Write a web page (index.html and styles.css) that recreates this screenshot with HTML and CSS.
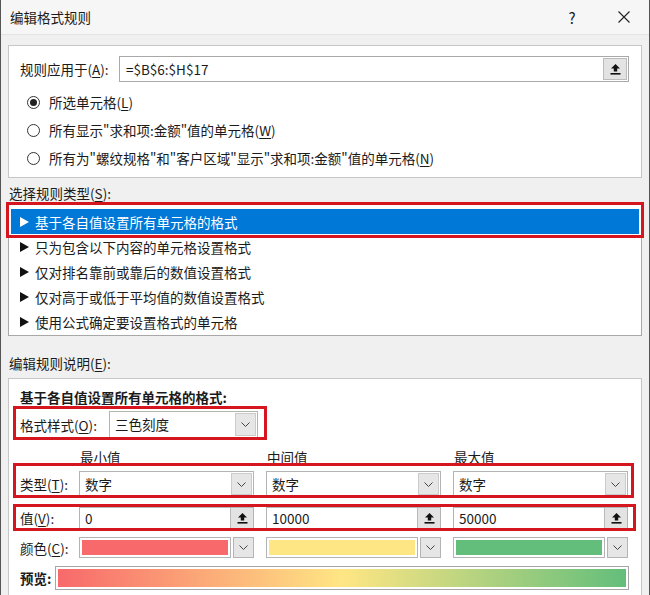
FILE: index.html
```html
<!DOCTYPE html>
<html lang="zh-CN">

<head>
    <meta charset="UTF-8">
    <title>编辑格式规则</title>
    <link rel="stylesheet" href="styles.css">
</head>

<body>
    <div class="dialog">
        <div class="titlebar">
            <span class="title">编辑格式规则</span>
            <span class="help">?</span>
            <span class="close">
                <svg width="12" height="12" viewBox="0 0 12 12"><path d="M0.5 0.5 L11.5 11.5 M11.5 0.5 L0.5 11.5" stroke="#222" stroke-width="1.1" fill="none"/></svg>
            </span>
        </div>

        <div class="content">
            <!-- range + scope -->
            <div class="panel apply">
                <div class="apply-row">
                    <span class="apply-label">规则应用于(<u>A</u>):</span>
                    <div class="ref-input">
                        <span class="ref-text">=$B$6:$H$17</span>
                        <span class="pick-btn">
                            <svg width="11" height="12" viewBox="0 0 11 12"><path d="M5.5 1 L10 5.5 H7.2 V8.5 H3.8 V5.5 H1 Z" fill="#111"/><rect x="0.5" y="10" width="10" height="1.6" fill="#111"/></svg>
                        </span>
                    </div>
                </div>
                <div class="radios">
                    <div class="radio-row"><span class="radio checked"></span>所选单元格(<u>L</u>)</div>
                    <div class="radio-row"><span class="radio"></span>所有显示"求和项:金额"值的单元格(<u>W</u>)</div>
                    <div class="radio-row"><span class="radio"></span>所有为"螺纹规格"和"客户区域"显示"求和项:金额"值的单元格(<u>N</u>)</div>
                </div>
            </div>

            <!-- rule types -->
            <div class="rule-label">选择规则类型(<u>S</u>):</div>
            <div class="listbox">
                <div class="list-item selected"><span class="tri"></span>基于各自值设置所有单元格的格式</div>
                <div class="list-item"><span class="tri"></span>只为包含以下内容的单元格设置格式</div>
                <div class="list-item"><span class="tri"></span>仅对排名靠前或靠后的数值设置格式</div>
                <div class="list-item"><span class="tri"></span>仅对高于或低于平均值的数值设置格式</div>
                <div class="list-item"><span class="tri"></span>使用公式确定要设置格式的单元格</div>
            </div>

            <!-- rule description -->
            <div class="desc-label">编辑规则说明(<u>E</u>):</div>
            <div class="panel edit-panel">
                <div class="edit-title">基于各自值设置所有单元格的格式:</div>

                <div class="style-row">
                    <span class="style-label">格式样式(<u>O</u>):</span>
                    <div class="combo style-combo">
                        <span class="combo-text">三色刻度</span>
                        <span class="drop-btn"><svg width="9" height="5" viewBox="0 0 9 5"><path d="M0.5 0.5 L4.5 4.5 L8.5 0.5" stroke="#444" fill="none"/></svg></span>
                    </div>
                </div>

                <div class="grid-row heads">
                    <span class="row-label"></span>
                    <span class="cell">最小值</span>
                    <span class="cell">中间值</span>
                    <span class="cell">最大值</span>
                </div>

                <div class="grid-row type-row">
                    <span class="row-label">类型(<u>T</u>):</span>
                    <div class="cell combo">
                        <span class="combo-text">数字</span>
                        <span class="drop-btn"><svg width="9" height="5" viewBox="0 0 9 5"><path d="M0.5 0.5 L4.5 4.5 L8.5 0.5" stroke="#444" fill="none"/></svg></span>
                    </div>
                    <div class="cell combo">
                        <span class="combo-text">数字</span>
                        <span class="drop-btn"><svg width="9" height="5" viewBox="0 0 9 5"><path d="M0.5 0.5 L4.5 4.5 L8.5 0.5" stroke="#444" fill="none"/></svg></span>
                    </div>
                    <div class="cell combo">
                        <span class="combo-text">数字</span>
                        <span class="drop-btn"><svg width="9" height="5" viewBox="0 0 9 5"><path d="M0.5 0.5 L4.5 4.5 L8.5 0.5" stroke="#444" fill="none"/></svg></span>
                    </div>
                </div>

                <div class="grid-row value-row">
                    <span class="row-label">值(<u>V</u>):</span>
                    <div class="cell value-box">
                        <span class="combo-text">0</span>
                        <span class="pick-btn"><svg width="11" height="12" viewBox="0 0 11 12"><path d="M5.5 1 L10 5.5 H7.2 V8.5 H3.8 V5.5 H1 Z" fill="#111"/><rect x="0.5" y="10" width="10" height="1.6" fill="#111"/></svg></span>
                    </div>
                    <div class="cell value-box">
                        <span class="combo-text">10000</span>
                        <span class="pick-btn"><svg width="11" height="12" viewBox="0 0 11 12"><path d="M5.5 1 L10 5.5 H7.2 V8.5 H3.8 V5.5 H1 Z" fill="#111"/><rect x="0.5" y="10" width="10" height="1.6" fill="#111"/></svg></span>
                    </div>
                    <div class="cell value-box">
                        <span class="combo-text">50000</span>
                        <span class="pick-btn"><svg width="11" height="12" viewBox="0 0 11 12"><path d="M5.5 1 L10 5.5 H7.2 V8.5 H3.8 V5.5 H1 Z" fill="#111"/><rect x="0.5" y="10" width="10" height="1.6" fill="#111"/></svg></span>
                    </div>
                </div>

                <div class="grid-row color-row">
                    <span class="row-label">颜色(<u>C</u>):</span>
                    <div class="cell color-box">
                        <span class="swatch red"></span>
                        <span class="drop-btn"><svg width="9" height="5" viewBox="0 0 9 5"><path d="M0.5 0.5 L4.5 4.5 L8.5 0.5" stroke="#444" fill="none"/></svg></span>
                    </div>
                    <div class="cell color-box">
                        <span class="swatch yellow"></span>
                        <span class="drop-btn"><svg width="9" height="5" viewBox="0 0 9 5"><path d="M0.5 0.5 L4.5 4.5 L8.5 0.5" stroke="#444" fill="none"/></svg></span>
                    </div>
                    <div class="cell color-box">
                        <span class="swatch green"></span>
                        <span class="drop-btn"><svg width="9" height="5" viewBox="0 0 9 5"><path d="M0.5 0.5 L4.5 4.5 L8.5 0.5" stroke="#444" fill="none"/></svg></span>
                    </div>
                </div>

                <div class="preview-row">
                    <span class="preview-label">预览:</span>
                    <div class="preview-box"><span class="gradient"></span></div>
                </div>
            </div>
        </div>

        <!-- red annotation boxes drawn over the dialog -->
        <div class="mark mark-list"></div>
        <div class="mark mark-style"></div>
        <div class="mark mark-type"></div>
        <div class="mark mark-value"></div>
    </div>
</body>

</html>
```

FILE: styles.css
```css
body {
    margin: 0;
    font-family: "Noto Sans CJK SC", "Microsoft YaHei", sans-serif;
    font-size: 13.5px;
    color: #1b1b1b;
}

u {
    text-underline-offset: 2px;
}

.dialog {
    position: relative;
    width: 650px;
    height: 595px;
    box-sizing: border-box;
    background-color: #f0f0f0;
    border-left: 1px solid #555;
    border-right: 1px solid #555;
    overflow: hidden;
}

.titlebar {
    height: 35px;
    box-sizing: border-box;
    display: flex;
    align-items: center;
    padding-left: 9px;
    background-color: #f6f6f6;
    border-bottom: 1px solid #e4e4e4;
}

.title {
    flex: 1;
}

.help {
    width: 40px;
    margin-right: 7px;
    text-align: center;
    font-size: 15px;
}

.close {
    width: 50px;
    display: flex;
    justify-content: center;
}

.content {
    padding: 10px 7px 0;
}

.panel {
    background-color: #fff;
    border: 1px solid #c6c6c6;
}

/* top panel */
.apply {
    padding: 10px 12px 5px 11px;
}

.apply-row {
    display: flex;
    align-items: center;
}

.apply-label {
    width: 99px;
}

.ref-input {
    flex: 1;
    height: 26px;
    box-sizing: border-box;
    display: flex;
    border: 1px solid #a9a9a9;
}

.ref-text {
    flex: 1;
    padding-left: 6px;
    line-height: 24px;
}

.pick-btn {
    width: 22px;
    display: flex;
    align-items: center;
    justify-content: center;
    background-color: #e3e3e3;
    border-left: 1px solid #b9b9b9;
}

.apply .pick-btn {
    margin: 1px;
    border: 1px solid #bcbcbc;
}

.radios {
    margin-top: 6px;
}

.radio-row {
    height: 28px;
    display: flex;
    align-items: center;
    padding-left: 7px;
}

.radio {
    width: 13px;
    height: 13px;
    box-sizing: border-box;
    border: 1px solid #333;
    border-radius: 50%;
    margin-right: 9px;
    display: flex;
    align-items: center;
    justify-content: center;
}

.radio.checked::after {
    content: "";
    width: 7px;
    height: 7px;
    border-radius: 50%;
    background-color: #222;
}

/* rule type list */
.rule-label {
    padding: 5px 1px 0;
    line-height: 20px;
}

.listbox {
    background-color: #fff;
    border: 1px solid #a8a8a8;
    padding: 5px 2px 1px;
}

.list-item {
    height: 25px;
    display: flex;
    align-items: center;
    padding-left: 9px;
}

.list-item.selected {
    background-color: #0078d7;
    color: #fff;
}

.tri {
    width: 0;
    height: 0;
    border-top: 5px solid transparent;
    border-bottom: 5px solid transparent;
    border-left: 9px solid #111;
    margin-right: 6px;
}

.selected .tri {
    border-left-color: #fff;
}

/* description panel */
.desc-label {
    padding: 17px 1px 5px;
    line-height: 20px;
}

.edit-panel {
    height: 230px;
    padding: 9px 12px 0 11px;
}

.edit-title {
    font-weight: bold;
    line-height: 18px;
}

.style-row {
    margin-top: 5px;
    display: flex;
    align-items: center;
}

.style-label {
    width: 89px;
}

.combo {
    display: flex;
    height: 26px;
    box-sizing: border-box;
    border: 1px solid #b4b4b4;
    background-color: #fff;
}

.style-combo {
    width: 149px;
    height: 27px;
}

.combo-text {
    flex: 1;
    padding-left: 5px;
    line-height: 24px;
}

.style-combo .combo-text {
    line-height: 25px;
}

.drop-btn {
    width: 19px;
    margin: 1px;
    display: flex;
    align-items: center;
    justify-content: center;
    background-color: #e6e6e6;
    border: 1px solid #cbcbcb;
}

.grid-row {
    display: flex;
    align-items: center;
}

.row-label {
    width: 59px;
}

.cell {
    width: 175px;
    box-sizing: border-box;
}

.cell + .cell {
    margin-left: 12px;
}

.heads {
    margin-top: 11px;
    line-height: 16px;
}

.heads .cell {
    padding-left: 1px;
}

.type-row {
    margin-top: 6px;
}

.value-row {
    margin-top: 10px;
}

.value-box {
    display: flex;
    height: 22px;
    border: 1px solid #b4b4b4;
    background-color: #fff;
}

.value-box .combo-text {
    line-height: 20px;
}

.value-box .pick-btn {
    width: 22px;
}

.color-row {
    margin-top: 8px;
}

.color-box {
    display: flex;
    height: 21px;
}

.swatch {
    flex: 1;
    border: 1px solid #b4b4b4;
    background-clip: content-box;
    padding: 2px;
    background-color: #fff;
}

.swatch.red {
    background-color: #f8696b;
}

.swatch.yellow {
    background-color: #ffe684;
}

.swatch.green {
    background-color: #63be7b;
}

.color-box .drop-btn {
    margin: 0 0 0 2px;
    border-color: #b4b4b4;
}

.preview-row {
    margin-top: 8px;
    display: flex;
    align-items: center;
}

.preview-label {
    width: 35px;
    font-weight: bold;
}

.preview-box {
    width: 574px;
    height: 24px;
    box-sizing: border-box;
    padding: 2px;
    border: 1px solid #a6a6a6;
    display: flex;
}

.gradient {
    flex: 1;
    background: linear-gradient(to right, #f8696b, #ffe684 50%, #63be7b);
}

/* red highlight annotations */
.mark {
    position: absolute;
    box-sizing: border-box;
    border: 3px solid #d5161e;
}

.mark-list {
    left: 5px;
    top: 202px;
    width: 638px;
    height: 36px;
}

.mark-style {
    left: 12px;
    top: 406px;
    width: 254px;
    height: 34px;
}

.mark-type {
    left: 12px;
    top: 463px;
    width: 621px;
    height: 35px;
}

.mark-value {
    left: 12px;
    top: 504px;
    width: 623px;
    height: 27px;
}
```
